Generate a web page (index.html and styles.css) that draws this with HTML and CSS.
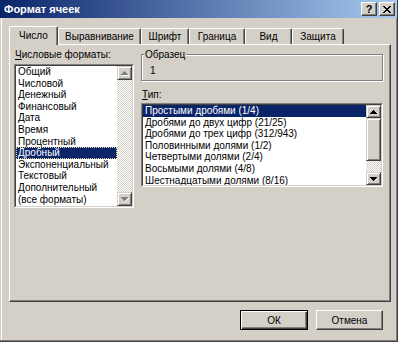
FILE: index.html
```html
<!DOCTYPE html>
<html lang="ru">
<head>
    <meta charset="UTF-8">
    <title>Формат ячеек</title>
    <link rel="stylesheet" href="styles.css">
</head>
<body>

    <div class="window">
        <!-- Title bar -->
        <div class="titlebar">
            <span class="title">Формат ячеек</span>
            <div class="title-buttons">
                <div class="tbtn help">?</div>
                <div class="tbtn">
                    <svg width="8" height="7" viewBox="0 0 8 7" shape-rendering="crispEdges">
                        <path d="M0 0h2v1h-2zM6 0h2v1h-2zM1 1h2v1h-2zM5 1h2v1h-2zM2 2h4v1h-4zM3 3h2v1h-2zM2 4h4v1h-4zM1 5h2v1h-2zM5 5h2v1h-2zM0 6h2v1h-2zM6 6h2v1h-2z" fill="#000"/>
                    </svg>
                </div>
            </div>
        </div>

        <div class="dialog-body">
            <!-- Tabs -->
            <div class="tabs">
                <div class="tab active">Число</div>
                <div class="tab">Выравнивание</div>
                <div class="tab">Шрифт</div>
                <div class="tab">Граница</div>
                <div class="tab">Вид</div>
                <div class="tab">Защита</div>
            </div>

            <div class="panel">
                <!-- Category list -->
                <div class="col-left">
                    <div class="label"><u>Ч</u>исловые форматы:</div>
                    <div class="field field-cat">
                        <div class="field-in">
                            <ul class="items">
                                <li>Общий</li>
                                <li>Числовой</li>
                                <li>Денежный</li>
                                <li>Финансовый</li>
                                <li>Дата</li>
                                <li>Время</li>
                                <li>Процентный</li>
                                <li class="selected focus">Дробный</li>
                                <li>Экспоненциальный</li>
                                <li>Текстовый</li>
                                <li>Дополнительный</li>
                                <li>(все форматы)</li>
                            </ul>
                            <div class="scrollbar disabled">
                                <div class="sb-btn">
                                    <svg width="8" height="5" viewBox="0 0 8 5" shape-rendering="crispEdges"><path d="M4 1h1v1h1v1h1v1h1v1h-7v-1h6v-1h-1v-1h-1z" fill="#fff"/><path d="M3 0h1v1h1v1h1v1h1v1h-7v-1h1v-1h1v-1h1z" fill="#808080"/></svg>
                                </div>
                                <div class="sb-track"></div>
                                <div class="sb-btn">
                                    <svg width="8" height="5" viewBox="0 0 8 5" shape-rendering="crispEdges"><path d="M1 1h7v1h-1v1h-1v1h-1v1h-1v-1h1v-1h1v-1h1v-1z" fill="#fff"/><path d="M0 0h7v1h-1v1h-1v1h-1v1h-1v-1h-1v-1h-1v-1h-1z" fill="#808080"/></svg>
                                </div>
                            </div>
                        </div>
                    </div>
                </div>

                <!-- Sample + type list -->
                <div class="col-right">
                    <fieldset class="group">
                        <legend>Образец</legend>
                        <div class="sample">1</div>
                    </fieldset>

                    <div class="label label-type"><u>Т</u>ип:</div>
                    <div class="field field-type">
                        <div class="field-in">
                            <ul class="items">
                                <li class="selected">Простыми дробями (1/4)</li>
                                <li>Дробями до двух цифр (21/25)</li>
                                <li>Дробями до трех цифр (312/943)</li>
                                <li>Половинными долями (1/2)</li>
                                <li>Четвертыми долями (2/4)</li>
                                <li>Восьмыми долями (4/8)</li>
                                <li>Шестнадцатыми долями (8/16)</li>
                            </ul>
                            <div class="scrollbar">
                                <div class="sb-btn">
                                    <svg width="7" height="4" viewBox="0 0 7 4" shape-rendering="crispEdges"><path d="M3 0h1v1h1v1h1v1h1v1h-7v-1h1v-1h1v-1h1z" fill="#000"/></svg>
                                </div>
                                <div class="sb-thumb"></div>
                                <div class="sb-track"></div>
                                <div class="sb-btn">
                                    <svg width="7" height="4" viewBox="0 0 7 4" shape-rendering="crispEdges"><path d="M0 0h7v1h-1v1h-1v1h-1v1h-1v-1h-1v-1h-1v-1h-1z" fill="#000"/></svg>
                                </div>
                            </div>
                        </div>
                    </div>
                </div>
            </div>

            <!-- Dialog buttons -->
            <div class="buttons">
                <div class="btn default">ОК</div>
                <div class="btn">Отмена</div>
            </div>
        </div>
    </div>

</body>
</html>
```

FILE: styles.css
```css
body {
    margin: 0;
    padding: 0;
    background-color: #d4d0c8;
    font-family: 'Liberation Sans', Arial, sans-serif;
    font-size: 10px;
    color: #000;
}
.window {
    width: 398px;
    height: 342px;
    box-sizing: border-box;
    background: #d4d0c8;
    border-right: 1px solid #404040;
    border-bottom: 1px solid #404040;
    box-shadow: inset -1px -1px 0 #808080, inset 1px 0 0 #d4d0c8, inset 2px 0 0 #fff;
}
.titlebar {
    height: 18px;
    display: flex;
    align-items: center;
    justify-content: space-between;
    padding: 0 2px 0 4px;
    background: linear-gradient(to right, #0a246a, #a6caf0);
}
.title {
    color: #fff;
    font-weight: bold;
    font-size: 11px;
}
.title-buttons {
    display: flex;
    gap: 2px;
}
.tbtn {
    width: 16px;
    height: 14px;
    box-sizing: border-box;
    display: flex;
    align-items: center;
    justify-content: center;
    background: #d4d0c8;
    border-top: 1px solid #fff;
    border-left: 1px solid #fff;
    border-right: 1px solid #404040;
    border-bottom: 1px solid #404040;
    box-shadow: inset -1px -1px 0 #808080;
}
.tbtn.help {
    font-weight: bold;
    font-size: 11px;
    line-height: 12px;
}
.dialog-body {
    padding: 8px 6px 0 9px;
}
.tabs {
    display: grid;
    grid-template-columns: 49px 83px 48px 56px 47px 52px;
    height: 18px;
    align-items: end;
}
.tab {
    height: 16px;
    box-sizing: border-box;
    display: flex;
    align-items: center;
    justify-content: center;
    padding-bottom: 1px;
    background: #d4d0c8;
    border-top: 1px solid #fff;
    border-left: 1px solid #fff;
    border-right: 1px solid #404040;
    border-radius: 2px 2px 0 0;
    box-shadow: inset -1px 0 0 #808080;
}
.tab.active {
    height: 19px;
    margin-bottom: -1px;
    position: relative;
    z-index: 1;
    padding-bottom: 2px;
}
.panel {
    height: 258px;
    box-sizing: border-box;
    display: flex;
    gap: 7px;
    padding: 3px 0 0 4px;
    border-top: 1px solid #fff;
    border-left: 1px solid #fff;
    border-right: 1px solid #404040;
    border-bottom: 1px solid #404040;
    box-shadow: inset -1px -1px 0 #808080;
}
.col-left {
    width: 120px;
}
.col-right {
    width: 242px;
}
.label {
    line-height: 13px;
    height: 13px;
    padding-left: 1px;
}
.label u {
    text-underline-offset: 1px;
}
.field {
    box-sizing: border-box;
    border-top: 1px solid #808080;
    border-left: 1px solid #808080;
    border-right: 1px solid #fff;
    border-bottom: 1px solid #fff;
}
.field-in {
    height: 100%;
    box-sizing: border-box;
    display: flex;
    background: #fff;
    border-top: 1px solid #404040;
    border-left: 1px solid #404040;
    border-right: 1px solid #d4d0c8;
    border-bottom: 1px solid #d4d0c8;
}
.field-cat {
    margin-top: 3px;
    height: 144px;
}
.field-type {
    margin-top: 2px;
    height: 84px;
}
.items {
    flex: 1;
    list-style: none;
    margin: 0;
    padding: 0;
    overflow: hidden;
}
.items li {
    height: 11.6px;
    line-height: 11.6px;
    padding-left: 2px;
    white-space: nowrap;
}
.items li.selected {
    background: #0a246a;
    color: #fff;
}
.items li.focus {
    outline: 1px dotted #e8d890;
    outline-offset: -1px;
}
.scrollbar {
    width: 15px;
    display: flex;
    flex-direction: column;
}
.sb-btn, .sb-thumb {
    box-sizing: border-box;
    background: #d4d0c8;
    border-top: 1px solid #d4d0c8;
    border-left: 1px solid #d4d0c8;
    border-right: 1px solid #404040;
    border-bottom: 1px solid #404040;
    box-shadow: inset 1px 1px 0 #fff, inset -1px -1px 0 #808080;
}
.sb-btn {
    height: 14px;
    display: flex;
    align-items: center;
    justify-content: center;
}
.field-type .sb-btn {
    height: 13px;
}
.sb-thumb {
    height: 43px;
}
.sb-track {
    flex: 1;
    background: repeating-conic-gradient(#d4d0c8 0 25%, #fff 0 50%) 0 0 / 2px 2px;
}
.group {
    margin: 0;
    padding: 0 2px;
    min-width: 0;
    height: 33px;
    box-sizing: border-box;
    border: 1px solid #808080;
    box-shadow: 1px 1px 0 #fff, inset 1px 1px 0 #fff;
}
.group legend {
    padding: 0 1px;
    line-height: 13px;
    background: #d4d0c8;
}
.sample {
    margin-top: 3px;
    padding-left: 6px;
    line-height: 13px;
}
.label-type {
    margin-top: 7px;
}
.buttons {
    display: flex;
    justify-content: flex-end;
    gap: 8px;
    margin-top: 8px;
    padding-right: 8px;
}
.btn {
    width: 67px;
    height: 20px;
    box-sizing: border-box;
    display: flex;
    align-items: center;
    justify-content: center;
    background: #d4d0c8;
    border-top: 1px solid #fff;
    border-left: 1px solid #fff;
    border-right: 1px solid #404040;
    border-bottom: 1px solid #404040;
    box-shadow: inset -1px -1px 0 #808080;
}
.btn.default {
    width: 68px;
    border: 1px solid #000;
    box-shadow: inset 1px 1px 0 #fff, inset -1px -1px 0 #404040, inset -2px -2px 0 #808080;
}
```
